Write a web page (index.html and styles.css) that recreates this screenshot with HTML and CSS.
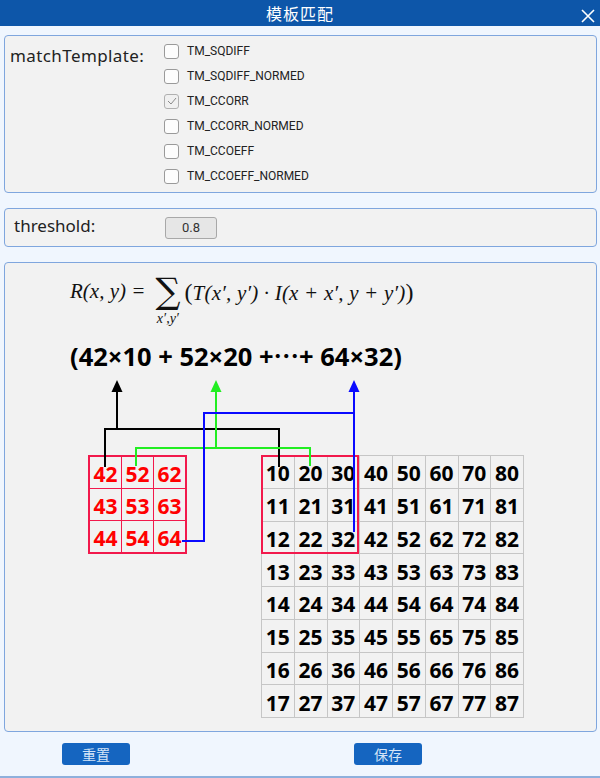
FILE: index.html
```html
<!DOCTYPE html>
<html lang="zh">

<head>
    <meta charset="UTF-8">
    <meta name="viewport" content="width=device-width, initial-scale=1.0">
    <title>模板匹配</title>
    <link rel="stylesheet" href="styles.css">
</head>

<body>
    <div class="window">
        <div class="titlebar">
            <span class="title">模板匹配</span>
            <span class="close">
                <svg width="14" height="14" viewBox="0 0 14 14">
                    <path d="M1 1 L13 13 M13 1 L1 13" stroke="#fff" stroke-width="1.6" fill="none" />
                </svg>
            </span>
        </div>

        <div class="content">
            <div class="panel method-panel">
                <div class="label">matchTemplate:</div>
                <div class="methods">
                    <label class="method"><span class="box"></span>TM_SQDIFF</label>
                    <label class="method"><span class="box"></span>TM_SQDIFF_NORMED</label>
                    <label class="method"><span class="box checked">
                            <svg width="10" height="8" viewBox="0 0 10 8">
                                <path d="M1 4 L4 7 L9 1" stroke="#8a8a8a" stroke-width="1" fill="none" />
                            </svg>
                        </span>TM_CCORR</label>
                    <label class="method"><span class="box"></span>TM_CCORR_NORMED</label>
                    <label class="method"><span class="box"></span>TM_CCOEFF</label>
                    <label class="method"><span class="box"></span>TM_CCOEFF_NORMED</label>
                </div>
            </div>

            <div class="panel threshold-panel">
                <div class="label">threshold:</div>
                <div class="value-box">0.8</div>
            </div>

            <div class="panel demo-panel">
                <div class="formula">
                    <span class="f-left">R(x, y) =</span>
                    <span class="sum">
                        <span class="sigma">∑</span>
                        <span class="sub">x′,y′</span>
                    </span>
                    <span class="f-right"><span class="big-paren">(</span>T(x′, y′) · I(x + x′, y + y′)<span class="big-paren">)</span></span>
                </div>

                <div class="expr">(42×10 + 52×20 +⋯+ 64×32)</div>

                <div class="grids">
                    <div class="grid small-grid" id="small-grid"></div>
                    <div class="big-wrap">
                        <div class="grid big-grid" id="big-grid"></div>
                        <div class="highlight"></div>
                    </div>
                </div>

                <svg class="arrows" viewBox="5 263 590 468">
                    <!-- black: 42 and 10 -->
                    <path d="M105 467 V429 H279 V467 M117 429 V390" stroke="#000" stroke-width="2" fill="none" />
                    <path d="M117 380 L111.5 392 L122.5 392 Z" fill="#000" />
                    <!-- green: 52 and 20 -->
                    <path d="M136 466 V448 H310 V466 M216 448 V390" stroke="#22ee22" stroke-width="2" fill="none" />
                    <path d="M216 380 L210.5 392 L221.5 392 Z" fill="#22ee22" />
                    <!-- blue: 64 and 32 -->
                    <path d="M182 541 H204 V413 H354 V532 M354 413 V390" stroke="#0a0aff" stroke-width="2" fill="none" />
                    <path d="M354 380 L348.5 392 L359.5 392 Z" fill="#0a0aff" />
                </svg>
            </div>

            <div class="actions">
                <button class="btn reset-btn">重置</button>
                <button class="btn save-btn">保存</button>
            </div>
        </div>
    </div>

    <script>
        document.addEventListener('DOMContentLoaded', () => {
            const small = document.getElementById('small-grid');
            for (let r = 0; r < 3; r++) {
                for (let c = 0; c < 3; c++) {
                    const cell = document.createElement('div');
                    cell.className = 'cell';
                    cell.textContent = (4 + c) * 10 + 2 + r;
                    small.appendChild(cell);
                }
            }

            const big = document.getElementById('big-grid');
            for (let r = 0; r < 8; r++) {
                for (let c = 0; c < 8; c++) {
                    const cell = document.createElement('div');
                    cell.className = 'cell';
                    cell.textContent = (1 + c) * 10 + r;
                    big.appendChild(cell);
                }
            }
        });
    </script>
</body>

</html>
```

FILE: styles.css
```css
body {
    margin: 0;
    background-color: #f0f6fe;
    font-family: "Noto Sans", "Noto Sans CJK SC", sans-serif;
}

.window {
    width: 600px;
    height: 776px;
    border-bottom: 2px solid #8fb0dc;
    overflow: hidden;
}

.titlebar {
    height: 26px;
    background-color: #0d56a9;
    position: relative;
    display: flex;
    align-items: center;
    justify-content: center;
}

.title {
    color: #fff;
    font-family: "Noto Sans CJK SC", sans-serif;
    font-size: 16px;
    letter-spacing: 1px;
}

.close {
    position: absolute;
    right: 5px;
    top: 6px;
    width: 14px;
    height: 14px;
}

.content {
    padding: 9px 3px 0 4px;
}

.panel {
    background-color: #f2f2f2;
    border: 1px solid #7fa6de;
    border-radius: 4px;
    box-sizing: border-box;
}

.label {
    font-size: 17px;
    color: #222;
}

.method-panel {
    height: 158px;
    display: flex;
    padding: 6px 0 0 5px;
}

.method-panel .label {
    width: 154px;
    padding-top: 2px;
    letter-spacing: 0.4px;
}

.methods {
    display: flex;
    flex-direction: column;
    gap: 11px;
    padding-top: 2px;
}

.method {
    display: flex;
    align-items: center;
    height: 14px;
    font-family: Roboto, sans-serif;
    font-size: 12px;
    color: #222;
}

.box {
    width: 13px;
    height: 13px;
    border: 1px solid #9a9a9a;
    border-radius: 3px;
    background-color: #fdfdfd;
    margin-right: 8px;
    display: flex;
    align-items: center;
    justify-content: center;
}

.box.checked {
    background-color: #f0f0f0;
    border-color: #b0b0b0;
}

.threshold-panel {
    margin-top: 15px;
    height: 39px;
    display: flex;
    align-items: center;
    padding-left: 9px;
}

.threshold-panel .label {
    width: 151px;
    margin-top: -4px;
}

.value-box {
    width: 52px;
    height: 22px;
    box-sizing: border-box;
    border: 1px solid #a8a8a8;
    border-radius: 3px;
    background-color: #e6e6e6;
    font-family: Roboto, sans-serif;
    font-size: 13px;
    color: #333;
    text-align: center;
    line-height: 20px;
}

.demo-panel {
    margin-top: 15px;
    height: 470px;
    position: relative;
}

.formula {
    display: flex;
    align-items: flex-start;
    padding: 8px 0 0 65px;
    height: 60px;
    font-family: "Liberation Serif", serif;
    font-style: italic;
    font-size: 21px;
    color: #111;
}

.f-left {
    margin-top: 8px;
    margin-right: 10px;
}

.sum {
    display: flex;
    flex-direction: column;
    align-items: center;
    font-style: normal;
    margin-top: 2px;
}

.sigma {
    font-family: "DejaVu Serif", serif;
    font-size: 35px;
    line-height: 36px;
}

.sub {
    font-style: italic;
    font-size: 14px;
    line-height: 14px;
    margin-top: 3px;
}

.f-right {
    margin-top: 8px;
    margin-left: 4px;
    letter-spacing: 0.2px;
}

.big-paren {
    font-style: normal;
    font-size: 24px;
}

.expr {
    padding-left: 65px;
    height: 42px;
    line-height: 42px;
    margin-top: 4px;
    font-weight: bold;
    font-size: 25.5px;
    color: #000;
}

.grids {
    display: flex;
    align-items: flex-start;
    margin-top: 78px;
    padding-left: 83px;
    gap: 74px;
}

.grid {
    display: grid;
    box-sizing: border-box;
}

.cell {
    background-color: #f2f2f2;
    display: flex;
    align-items: center;
    justify-content: center;
    font-weight: bold;
    font-size: 21px;
    padding-top: 3px;
}

.small-grid {
    width: 99px;
    height: 99px;
    grid-template-columns: repeat(3, 1fr);
    gap: 1px;
    padding: 2px;
    background-color: #f2194c;
}

.small-grid .cell {
    color: #ff0000;
}

.big-wrap {
    position: relative;
}

.big-grid {
    width: 263px;
    height: 263px;
    grid-template-columns: repeat(8, 1fr);
    gap: 1px;
    padding: 1px;
    background-color: #c6c6c6;
}

.big-grid .cell {
    color: #000;
}

.highlight {
    position: absolute;
    left: 0;
    top: 0;
    width: 98px;
    height: 99px;
    box-sizing: border-box;
    border: 2px solid #f2194c;
}

.arrows {
    position: absolute;
    left: 0;
    top: 0;
    width: 590px;
    height: 468px;
}

.actions {
    display: flex;
    padding: 11px 0 0 58px;
    gap: 224px;
}

.btn {
    width: 68px;
    height: 22px;
    border: none;
    border-radius: 3px;
    background-color: #1565c0;
    color: #d4e4f7;
    font-family: "Noto Sans CJK SC", sans-serif;
    font-size: 14px;
    padding: 0;
}
```
